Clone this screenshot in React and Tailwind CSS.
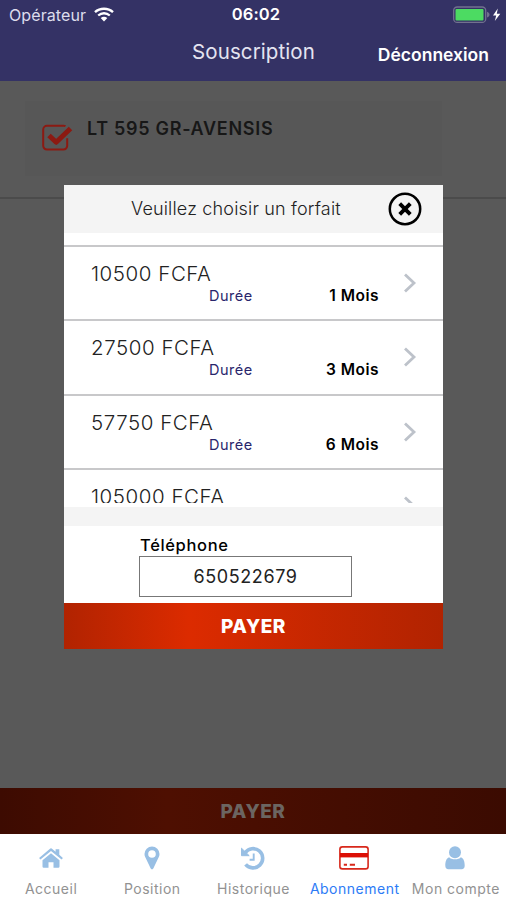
import clsx from "clsx";

const plans = [
  { price: "10500 FCFA", duration: "1 Mois" },
  { price: "27500 FCFA", duration: "3 Mois" },
  { price: "57750 FCFA", duration: "6 Mois" },
  { price: "105000 FCFA" },
];

function WifiIcon() {
  return (
    <svg width="20" height="15" viewBox="0 0 20 15" fill="none">
      <path d="M1 5.2C6 .6 14 .6 19 5.2" stroke="white" strokeWidth="2.4" />
      <path d="M4.2 8.5c3.4-3 8.2-3 11.6 0" stroke="white" strokeWidth="2.3" />
      <path d="M6.7 11.1c2-1.7 4.6-1.7 6.6 0L10 14.6z" fill="white" />
    </svg>
  );
}

function BatteryIcon() {
  return (
    <svg width="48" height="18" viewBox="0 0 48 18">
      <rect x=".7" y="1" width="32" height="15.4" rx="3.5" fill="none" stroke="#72718f" strokeWidth="1.3" />
      <rect x="2.5" y="3" width="28" height="11.4" rx="1" fill="#4cdb62" />
      <path d="M34 5.8c3.4 1.2 3.4 4.6 0 5.8z" fill="#72718f" />
      <path d="M44.8 2.6 40 9.6h3.2l-1.4 5.4 5.5-7.300h-3.500z" fill="white" />
    </svg>
  );
}

function CheckIcon() {
  return (
    <svg width="32" height="28" viewBox="0 0 32 28" fill="none">
      <path
        d="M23.5 2.200c-.5-.3-1.200-.4-2-.4H5A3.800 3.800 0 0 0 1.200 5.600v16.200A3.800 3.800 0 0 0 5 25.600h16.400a3.800 3.800 0 0 0 3.800-3.800v-7.500"
        stroke="#8c1a12"
        strokeWidth="2"
      />
      <path d="m7 11.500 7.200 6.800L28.500 4.500" stroke="#8c1a12" strokeWidth="5" strokeLinejoin="round" />
    </svg>
  );
}

function CloseIcon() {
  return (
    <svg width="34" height="34" viewBox="0 0 34 34" fill="none" stroke="black">
      <circle cx="17" cy="17" r="15.2" strokeWidth="2.500" />
      <path d="m11.700 11.700 10.600 10.600m0-10.600L11.700 22.300" strokeWidth="3.900" />
    </svg>
  );
}

function HomeIcon() {
  return (
    <svg width="24" height="20" viewBox="0 0 24 20" fill="#98bfe4">
      <path d="M12 5.200 20.500 12.300V18.500a1.200 1.200 0 0 1-1.200 1.200H14.500v-5.500h-5v5.500H4.700a1.200 1.200 0 0 1-1.200-1.200V12.300z" />
      <path d="M10.700.9a2 2 0 0 1 2.600 0l3.300 2.800V1.300h3.700v5.500l3.600 3.100-1.300 1.600L12 2.900 1.400 11.500.1 9.900z" />
    </svg>
  );
}

function PinIcon() {
  return (
    <svg width="16" height="24" viewBox="0 0 16 24" fill="#98bfe4">
      <path
        fillRule="evenodd"
        d="M8 .5a7.500 7.500 0 0 1 7.500 7.500c0 1.200-.3 2.200-.7 3.100L9.300 22.600a1.450 1.450 0 0 1-2.600 0L1.200 11.100C.8 10.200.5 9.200.5 8A7.500 7.500 0 0 1 8 .5zm0 3.700a3.800 3.800 0 1 0 0 7.600 3.800 3.800 0 0 0 0-7.600z"
      />
    </svg>
  );
}

function HistoryIcon() {
  return (
    <svg width="24" height="24" viewBox="0 0 24 24" fill="none">
      <path d="M4.200 6.800A9.600 9.600 0 1 1 4.600 18.300" stroke="#98bfe4" strokeWidth="3.600" />
      <path d="M.5 2.200v7.500h7.700z" fill="#98bfe4" stroke="#98bfe4" strokeLinejoin="round" />
      <path d="M12.700 7.500v6.200H8.600" stroke="#98bfe4" strokeWidth="1.900" />
    </svg>
  );
}

function CardIcon() {
  return (
    <svg width="30" height="24" viewBox="0 0 30 24" fill="none">
      <rect x=".9" y=".9" width="28.200" height="22" rx="2.500" stroke="#d8281b" strokeWidth="1.600" />
      <path d="M1 9.200h28" stroke="#dc0f05" strokeWidth="4.400" />
      <path d="M4.800 18.700h3.200m2.800 0h5.200" stroke="#d8281b" strokeWidth="2" />
    </svg>
  );
}

function UserIcon() {
  return (
    <svg width="20" height="24" viewBox="0 0 20 24" fill="#98bfe4">
      <circle cx="10" cy="6.200" r="6" />
      <path d="M4.200 11.200C6 14 14 14 15.800 11.200 18.800 12 19.700 16 19.700 19.500c0 2.500-1.200 3.800-3 3.800H3.300c-1.800 0-3-1.300-3-3.800 0-3.500.9-7.500 3.900-8.300z" />
    </svg>
  );
}

const tabs = [
  { label: "Accueil", icon: <HomeIcon /> },
  { label: "Position", icon: <PinIcon /> },
  { label: "Historique", icon: <HistoryIcon /> },
  { label: "Abonnement", icon: <CardIcon />, active: true },
  { label: "Mon compte", icon: <UserIcon /> },
];

function Header() {
  return (
    <header className="h-[81px] shrink-0 bg-[#343265] text-white">
      <div className="grid h-[29px] grid-cols-3 items-center pl-[9px] pr-[5px]">
        <div className="flex items-center gap-2 text-[16px] tracking-[0.1px] text-[#dddded]">
          Opérateur
          <WifiIcon />
        </div>
        <span className="pl-0.5 text-center text-[16.500px] font-semibold tracking-[0.1px]">06:02</span>
        <div className="flex justify-end">
          <BatteryIcon />
        </div>
      </div>
      <div className="grid grid-cols-[1fr_auto_1fr] items-center">
        <span />
        <h1 className="pb-0.5 pl-px text-[20.500px] leading-[46px] tracking-[0.1px] text-[#e4e4f1]">Souscription</h1>
        <span className="pr-[17px] pt-1 text-right text-[17.500px] font-semibold">Déconnexion</span>
      </div>
    </header>
  );
}

function PlanRow({ price, duration }) {
  return (
    <div className="flex h-[74.300px] shrink-0 border-t-2 border-[#c8c8ca] pl-[27px] pr-[26px]">
      <div className="w-[288px] pt-3.5">
        <div className="text-[20.500px] font-light leading-[26px] tracking-[0.55px] text-[#222]">{price}</div>
        {duration && (
          <div className="-mt-px flex justify-between pl-[118px] text-[14.500px] leading-5">
            <span className="tracking-[0.5px] text-[#29256b]">Durée</span>
            <span className="text-[15.500px] font-semibold tracking-[0.5px] text-black">{duration}</span>
          </div>
        )}
      </div>
      <svg className="ml-auto mt-[26px]" width="14" height="20" viewBox="0 0 14 20" fill="none">
        <path d="m2 1.500 9 8.500-9 8.500" stroke="#bdc2ca" strokeWidth="2.800" />
      </svg>
    </div>
  );
}

function PlanModal() {
  return (
    <div className="absolute left-16 top-[185px] flex h-[464px] w-[379px] flex-col bg-white">
      <div className="flex h-12 shrink-0 items-center justify-between bg-[#f4f4f4] pl-[67px] pr-[21px]">
        <span className="pb-0.5 text-[18px] font-light tracking-[0.17px] text-[#222]">Veuillez choisir un forfait</span>
        <CloseIcon />
      </div>
      <div className="mt-3 flex h-[258px] shrink-0 flex-col overflow-hidden">
        {plans.map((plan) => (
          <PlanRow key={plan.price} {...plan} />
        ))}
      </div>
      <div className="mt-1 h-[19px] shrink-0 bg-[#f4f4f4]" />
      <div className="flex h-[77px] shrink-0 flex-col pl-[75px] pt-[9px]">
        <label className="pl-px text-[16.500px] font-medium leading-[21px] tracking-[0.65px] text-black">Téléphone</label>
        <div className="flex h-[41px] w-[213px] items-center justify-center border-[1.500px] border-[#777] text-[18px] tracking-[0.6px] text-[#222]">
          650522679
        </div>
      </div>
      <button className="h-[46px] bg-linear-to-r from-[#b12301] via-[#dc2b00] via-33% to-[#b12301] pt-0.5 text-[19px] font-extrabold tracking-[0.5px] text-white">
        PAYER
      </button>
    </div>
  );
}

export default function App() {
  return (
    <div className="relative flex h-[900px] w-[506px] flex-col overflow-hidden bg-[#595959] font-['Inter','Liberation_Sans',sans-serif]">
      <Header />
      {/* vehicle list */}
      <main className="flex-1">
        <div className="h-[118px] border-b-2 border-[#4b4b4b] pt-5">
          <div className="ml-[25px] flex h-[75px] w-[417px] bg-[#575757] pl-[17px]">
            <div className="pt-[23px]">
              <CheckIcon />
            </div>
            <span className="ml-[13px] mt-[18px] text-[18px] font-semibold leading-5 tracking-[0.7px] text-[#171717]">
              LT 595 GR-AVENSIS
            </span>
          </div>
        </div>
      </main>
      <button className="h-[46px] shrink-0 bg-linear-to-r from-[#3d0b01] via-[#4e0f01] via-33% to-[#3b0b01] pt-0.5 text-[19px] font-extrabold tracking-[0.5px] text-[#6b6561]">
        PAYER
      </button>
      {/* bottom tabs */}
      <nav className="grid h-[66px] shrink-0 grid-cols-5 bg-white">
        {tabs.map((tab) => (
          <div key={tab.label} className="flex flex-col items-center pt-3">
            <div className="flex h-6 items-center">{tab.icon}</div>
            <span
              className={clsx(
                "mt-[9px] whitespace-nowrap pl-px text-[14px] leading-5 tracking-[0.5px]",
                tab.active ? "text-[#2d7bf6]" : "text-[#929292]"
              )}>
              {tab.label}
            </span>
          </div>
        ))}
      </nav>
      <PlanModal />
    </div>
  );
}
